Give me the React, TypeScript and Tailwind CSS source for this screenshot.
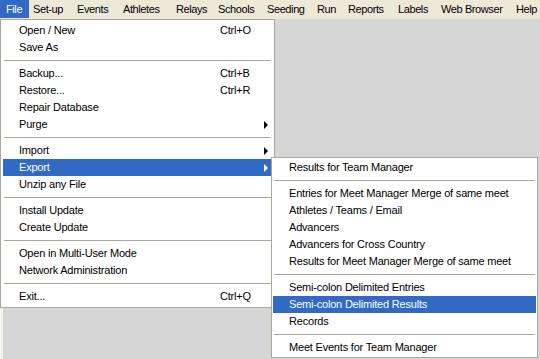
import React from "react";

type Item =
  | { sep: true }
  | { label: string; shortcut?: string; arrow?: boolean; active?: boolean; sep?: false };

const fileItems: Item[] = [
  { label: "Open / New", shortcut: "Ctrl+O" },
  { label: "Save As" },
  { sep: true },
  { label: "Backup...", shortcut: "Ctrl+B" },
  { label: "Restore...", shortcut: "Ctrl+R" },
  { label: "Repair Database" },
  { label: "Purge", arrow: true },
  { sep: true },
  { label: "Import", arrow: true },
  { label: "Export", arrow: true, active: true },
  { label: "Unzip any File" },
  { sep: true },
  { label: "Install Update" },
  { label: "Create Update" },
  { sep: true },
  { label: "Open in Multi-User Mode" },
  { label: "Network Administration" },
  { sep: true },
  { label: "Exit...", shortcut: "Ctrl+Q" },
];

const subItems: Item[] = [
  { label: "Results for Team Manager" },
  { sep: true },
  { label: "Entries for Meet Manager Merge of same meet" },
  { label: "Athletes / Teams / Email" },
  { label: "Advancers" },
  { label: "Advancers for Cross Country" },
  { label: "Results for Meet Manager Merge of same meet" },
  { sep: true },
  { label: "Semi-colon Delimited Entries" },
  { label: "Semi-colon Delimited Results", active: true },
  { label: "Records" },
  { sep: true },
  { label: "Meet Events for Team Manager" },
];

const menubar: { label: string; cls: string }[] = [
  { label: "File", cls: "w-[29px] pl-[6px] bg-[#316ac5] text-white" },
  { label: "Set-up", cls: "w-[42px] pl-[4px]" },
  { label: "Events", cls: "w-[46px] pl-[6px]" },
  { label: "Athletes", cls: "w-[54px] pl-[6px]" },
  { label: "Relays", cls: "w-[42px] pl-[5px]" },
  { label: "Schools", cls: "w-[48px] pl-[5px]" },
  { label: "Seeding", cls: "w-[50px] pl-[6px]" },
  { label: "Run", cls: "w-[31px] pl-[6px]" },
  { label: "Reports", cls: "w-[50px] pl-[6px]" },
  { label: "Labels", cls: "w-[43px] pl-[6px]" },
  { label: "Web Browser", cls: "w-[75px] pl-[6px]" },
  { label: "Help", cls: "w-[31px] pl-[6px]" },
];

function MenuRows({ items, labelWidth }: { items: Item[]; labelWidth?: string }) {
  return (
    <>
      {items.map((it, i) => {
        if (it.sep) {
          return (
            <div key={i} className="h-[9px] flex items-center px-[1px]">
              <div className="h-px w-full bg-[#aca899]" />
            </div>
          );
        }
        return (
          <div
            key={i}
            className={
              "h-[17px] flex items-center pl-[16px] pr-[4px] whitespace-nowrap " +
              (it.active ? "bg-[#316ac5] text-white" : "text-black")
            }
          >
            <span className={labelWidth ? labelWidth : "flex-1"}>{it.label}</span>
            {it.shortcut ? <span className="flex-1">{it.shortcut}</span> : null}
            {!it.shortcut && labelWidth ? <span className="flex-1" /> : null}
            {it.arrow ? (
              <span
                className={
                  "w-0 h-0 border-y-[4px] border-y-transparent border-l-[4px] " +
                  (it.active ? "border-l-white" : "border-l-black")
                }
              />
            ) : null}
          </div>
        );
      })}
    </>
  );
}

export default function App() {
  return (
    <div
      className="w-[540px] h-[359px] relative overflow-hidden bg-[#d6d6d6] text-[11px] leading-[13px] tracking-[-0.2px] flex flex-col"
      style={{ fontFamily: '"Liberation Sans", Arial, sans-serif' }}
    >
      <div className="h-[19px] bg-[#ece9d8] flex items-start whitespace-nowrap tracking-[-0.4px]">
        {menubar.map((m) => (
          <div key={m.label} className={"h-[18px] shrink-0 flex items-center text-black " + m.cls}>
            {m.label}
          </div>
        ))}
      </div>
      <div className="flex-1 border-l-[3px] border-l-[#f4f3ee]" />

      {/* File menu */}
      <div className="absolute left-0 top-[19px] w-[275px] bg-white border border-[#aca899] py-[2px] px-[2px]">
        <MenuRows items={fileItems} labelWidth="w-[201px]" />
      </div>

      {/* Export submenu */}
      <div className="absolute left-[271px] top-[157px] w-[267px] bg-white border border-[#aca899] p-[1px]">
        <MenuRows items={subItems} />
      </div>
    </div>
  );
}
